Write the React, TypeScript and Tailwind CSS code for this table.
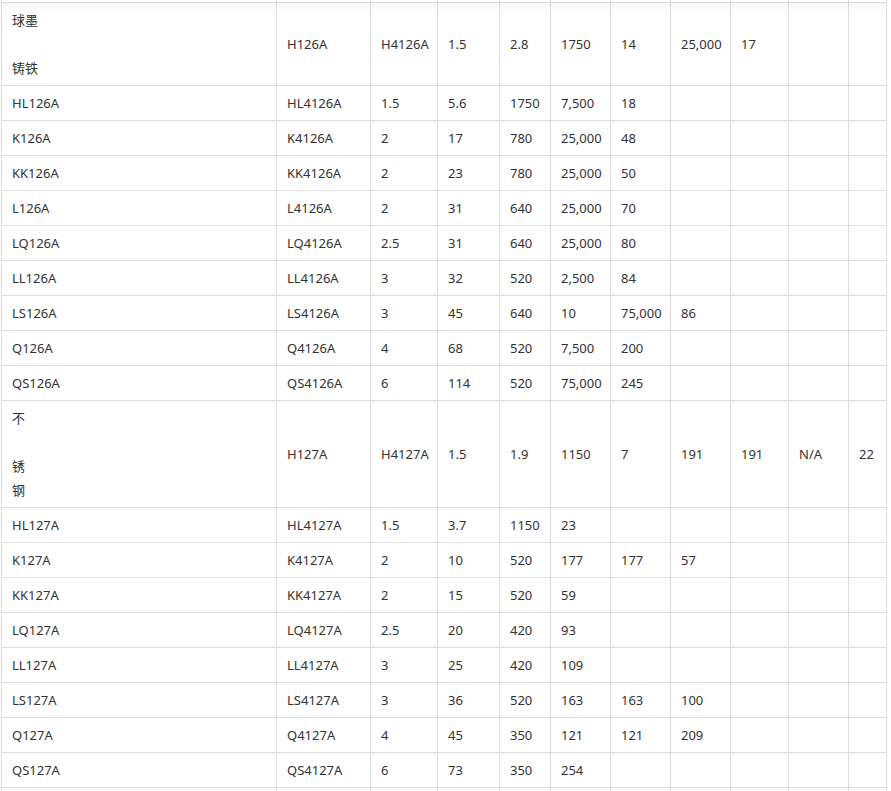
import React from "react";

type Row = { a: string[]; cells: string[] };

const rows: Row[] = [
  { a: ["球墨", "", "铸铁"], cells: ["H126A", "H4126A", "1.5", "2.8", "1750", "14", "25,000", "17", "", ""] },
  { a: ["HL126A"], cells: ["HL4126A", "1.5", "5.6", "1750", "7,500", "18", "", "", "", ""] },
  { a: ["K126A"], cells: ["K4126A", "2", "17", "780", "25,000", "48", "", "", "", ""] },
  { a: ["KK126A"], cells: ["KK4126A", "2", "23", "780", "25,000", "50", "", "", "", ""] },
  { a: ["L126A"], cells: ["L4126A", "2", "31", "640", "25,000", "70", "", "", "", ""] },
  { a: ["LQ126A"], cells: ["LQ4126A", "2.5", "31", "640", "25,000", "80", "", "", "", ""] },
  { a: ["LL126A"], cells: ["LL4126A", "3", "32", "520", "2,500", "84", "", "", "", ""] },
  { a: ["LS126A"], cells: ["LS4126A", "3", "45", "640", "10", "75,000", "86", "", "", ""] },
  { a: ["Q126A"], cells: ["Q4126A", "4", "68", "520", "7,500", "200", "", "", "", ""] },
  { a: ["QS126A"], cells: ["QS4126A", "6", "114", "520", "75,000", "245", "", "", "", ""] },
  { a: ["不", "", "锈", "钢"], cells: ["H127A", "H4127A", "1.5", "1.9", "1150", "7", "191", "191", "N/A", "22"] },
  { a: ["HL127A"], cells: ["HL4127A", "1.5", "3.7", "1150", "23", "", "", "", "", ""] },
  { a: ["K127A"], cells: ["K4127A", "2", "10", "520", "177", "177", "57", "", "", ""] },
  { a: ["KK127A"], cells: ["KK4127A", "2", "15", "520", "59", "", "", "", "", ""] },
  { a: ["LQ127A"], cells: ["LQ4127A", "2.5", "20", "420", "93", "", "", "", "", ""] },
  { a: ["LL127A"], cells: ["LL4127A", "3", "25", "420", "109", "", "", "", "", ""] },
  { a: ["LS127A"], cells: ["LS4127A", "3", "36", "520", "163", "163", "100", "", "", ""] },
  { a: ["Q127A"], cells: ["Q4127A", "4", "45", "350", "121", "121", "209", "", "", ""] },
  { a: ["QS127A"], cells: ["QS4127A", "6", "73", "350", "254", "", "", "", "", ""] },
  { a: [""], cells: ["", "", "", "", "", "", "", "", "", ""] },
];

const widths = [275, 94, 67, 62, 51, 60, 60, 60, 58, 60, 38];

export default function App() {
  return (
    <div
      className="relative h-[791px] w-[891px] overflow-hidden bg-white text-[13px] leading-6 text-[#333]"
      style={{ fontFamily: '"Noto Sans", "Noto Sans CJK SC", sans-serif' }}
    >
      <table className="ml-px mt-[-33px] w-[886px] table-fixed border-collapse">
        <colgroup>
          {widths.map((w, i) => (
            <col key={i} style={{ width: w }} />
          ))}
        </colgroup>
        <tbody>
          <tr>
            {widths.map((_, i) => (
              <td key={i} className="border border-[#dddddd] px-[10px] py-[5px]">
                &nbsp;
              </td>
            ))}
          </tr>
          {rows.map((r, ri) => (
            <tr key={ri}>
              <td className="border border-[#dddddd] px-[10px] py-[5px] align-middle">
                {r.a.map((t, i) => (
                  <div key={i} className="h-6">
                    {t}
                  </div>
                ))}
              </td>
              {r.cells.map((c, ci) => (
                <td key={ci} className="border border-[#dddddd] px-[10px] py-[5px] align-middle whitespace-nowrap">
                  {c}
                </td>
              ))}
            </tr>
          ))}
        </tbody>
      </table>
      <div className="pointer-events-none absolute left-0 top-[3px] h-[9px] w-[886px] bg-gradient-to-b from-[rgba(0,0,0,0.035)] to-transparent" />
    </div>
  );
}
